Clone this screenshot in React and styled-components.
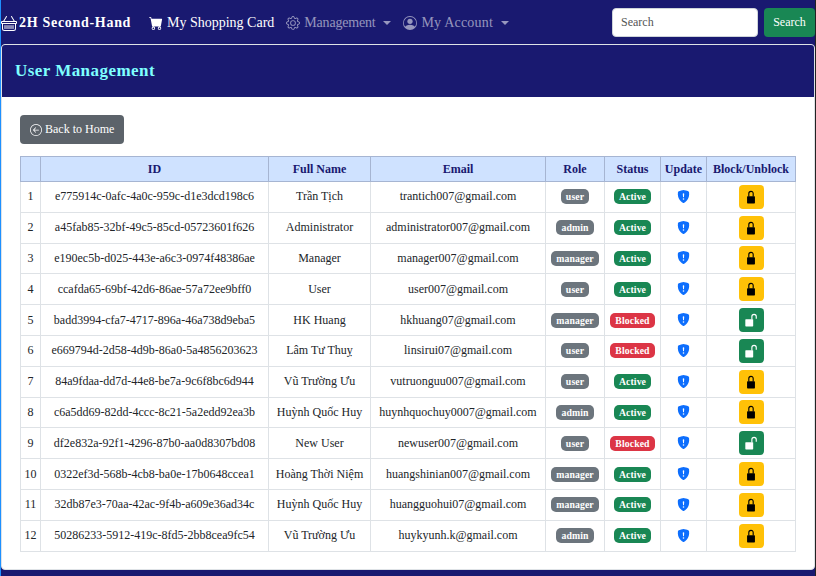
import React from 'react'
import styled, { createGlobalStyle } from 'styled-components'
import {
  BsBasket,
  BsCartFill,
  BsGear,
  BsPersonCircle,
  BsArrowLeftCircle,
  BsShieldFillExclamation
} from 'react-icons/bs'

const GlobalStyle = createGlobalStyle`
  html, body {
    margin: 0;
    padding: 0;
    background: #191970;
    height: 576px;
    overflow: hidden;
  }
  * { box-sizing: border-box; }
  body {
    font-family: "Liberation Serif", "Times New Roman", serif;
    font-size: 12px;
  }
`

const Page = styled.div`
  width: 816px;
  height: 576px;
  background: #191970;
  border-left: 1px solid #1e90ff;
  border-right: 1px solid #222;
  display: flex;
  flex-direction: column;
`

const Navbar = styled.nav`
  height: 44px;
  display: flex;
  align-items: center;
  color: #fff;
  flex-shrink: 0;
`

const Brand = styled.a`
  display: flex;
  align-items: center;
  gap: 2px;
  font-size: 14px;
  font-weight: bold;
  letter-spacing: 0.7px;
  color: #fff;
  width: 148px;
  padding-top: 1px;
`

const NavItem = styled.a`
  display: flex;
  align-items: center;
  gap: 4px;
  padding-top: 1px;
  font-size: 14px;
  letter-spacing: ${({ $spacing = 0 }) => $spacing}px;
  color: ${({ $muted }) => ($muted ? 'rgba(255,255,255,0.55)' : '#fff')};
  margin-right: ${({ $gap }) => $gap}px;
`

const Caret = styled.span`
  width: 0;
  height: 0;
  margin-left: 4px;
  border-top: 4px solid rgba(255,255,255,0.55);
  border-left: 4px solid transparent;
  border-right: 4px solid transparent;
`

const SearchForm = styled.form`
  margin-left: auto;
  display: flex;
  gap: 6px;
`

const SearchInput = styled.input`
  width: 146px;
  height: 29px;
  border: 1px solid #ced4da;
  border-radius: 4px;
  padding: 0 8px;
  font: 12px "Liberation Serif", serif;
  background: #fff;
  &::placeholder { color: #555; opacity: 1; }
`

const SearchButton = styled.button`
  width: 51px;
  height: 29px;
  border: none;
  border-radius: 4px;
  background: #198754;
  color: #fff;
  font: 12px "Liberation Serif", serif;
  padding: 0;
`

const Card = styled.section`
  flex: 0 0 526px;
  background: #fff;
  border: 1px solid #dee2e6;
  border-radius: 4px;
  overflow: hidden;
`

const CardHeader = styled.header`
  height: 52px;
  background: #191970;
  display: flex;
  align-items: center;
  padding-left: 13px;
`

const Title = styled.h2`
  margin: 0;
  font-size: 17px;
  font-weight: bold;
  color: #7fffff;
  letter-spacing: 0.45px;
`

const CardBody = styled.div`
  padding: 18px 0 0 18px;
`

const BackButton = styled.a`
  display: inline-flex;
  align-items: center;
  gap: 3px;
  width: 104px;
  height: 29px;
  padding-left: 10px;
  border-radius: 4px;
  background: #5c636a;
  color: #fff;
  font-size: 12px;
`

const Table = styled.table`
  width: 775px;
  margin-top: 12px;
  border-collapse: collapse;
  table-layout: fixed;
`

const Head = styled.th`
  height: 25px;
  padding: 0;
  background: #cfe2ff;
  border: 1px solid #a6b5d2;
  color: #191970;
  font-size: 12px;
  font-weight: bold;
  text-align: center;
  width: ${({ $w }) => $w}px;
`

const Cell = styled.td`
  height: 30.8px;
  padding: 0;
  border: 1px solid #dee2e6;
  color: #212529;
  font-size: 12px;
  text-align: center;
  vertical-align: middle;
`

const Badge = styled.span`
  display: inline-block;
  padding: 2px 5px;
  font-size: 9.75px;
  font-weight: bold;
  line-height: 11px;
  letter-spacing: 0.1px;
  border-radius: 5px;
  color: #fff;
  background: ${({ $bg }) => $bg};
`

const ShieldLink = styled.a`
  display: inline-flex;
  color: #0d6efd;
  font-size: 13px;
  vertical-align: middle;
  margin-bottom: 2px;
`

const LockButton = styled.button`
  display: inline-flex;
  align-items: center;
  justify-content: center;
  width: 25px;
  height: 24px;
  padding: 0;
  border: none;
  border-radius: 4px;
  background: ${({ $blocked }) => ($blocked ? '#198754' : '#ffc107')};
  color: ${({ $blocked }) => ($blocked ? '#fff' : '#000')};
  vertical-align: middle;
`

const LockIcon = () => (
  <svg width="14" height="14" viewBox="0 0 16 16">
    <rect x="3.5" y="7" width="9" height="8.5" rx="0.8" fill="currentColor" />
    <path d="M5.5 7.5V4a2.5 2.5 0 0 1 5 0v3.5" fill="none" stroke="currentColor" strokeWidth="1.3" />
  </svg>
)

const UnlockIcon = () => (
  <svg width="14" height="14" viewBox="0 0 16 16">
    <rect x="1.5" y="7" width="9" height="8.5" rx="0.8" fill="currentColor" />
    <path d="M9 7.5V4a2.5 2.5 0 0 1 5 0v2.5" fill="none" stroke="currentColor" strokeWidth="1.3" />
  </svg>
)

const users = [
  ['e775914c-0afc-4a0c-959c-d1e3dcd198c6', 'Trần Tịch', 'trantich007@gmail.com', 'user', false],
  ['a45fab85-32bf-49c5-85cd-05723601f626', 'Administrator', 'administrator007@gmail.com', 'admin', false],
  ['e190ec5b-d025-443e-a6c3-0974f48386ae', 'Manager', 'manager007@gmail.com', 'manager', false],
  ['ccafda65-69bf-42d6-86ae-57a72ee9bff0', 'User', 'user007@gmail.com', 'user', false],
  ['badd3994-cfa7-4717-896a-46a738d9eba5', 'HK Huang', 'hkhuang07@gmail.com', 'manager', true],
  ['e669794d-2d58-4d9b-86a0-5a4856203623', 'Lâm Tư Thuỵ', 'linsirui07@gmail.com', 'user', true],
  ['84a9fdaa-dd7d-44e8-be7a-9c6f8bc6d944', 'Vũ Trường Ưu', 'vutruonguu007@gmail.com', 'user', false],
  ['c6a5dd69-82dd-4ccc-8c21-5a2edd92ea3b', 'Huỳnh Quốc Huy', 'huynhquochuy0007@gmail.com', 'admin', false],
  ['df2e832a-92f1-4296-87b0-aa0d8307bd08', 'New User', 'newuser007@gmail.com', 'user', true],
  ['0322ef3d-568b-4cb8-ba0e-17b0648ccea1', 'Hoàng Thời Niệm', 'huangshinian007@gmail.com', 'manager', false],
  ['32db87e3-70aa-42ac-9f4b-a609e36ad34c', 'Huỳnh Quốc Huy', 'huangguohui07@gmail.com', 'manager', false],
  ['50286233-5912-419c-8fd5-2bb8cea9fc54', 'Vũ Trường Ưu', 'huykyunh.k@gmail.com', 'admin', false]
]

const columns = [
  ['', 20],
  ['ID', 228],
  ['Full Name', 102],
  ['Email', 175],
  ['Role', 59],
  ['Status', 56],
  ['Update', 46],
  ['Block/Unblock', 89]
]

export default function App() {
  return (
    <>
      <GlobalStyle />
      <Page>
        <Navbar>
          <Brand><BsBasket size={16} /> 2H Second-Hand</Brand>
          <NavItem $gap={12}><BsCartFill size={14} /> My Shopping Card</NavItem>
          <NavItem $muted $gap={12} $spacing={-0.2}><BsGear size={14} /> Management <Caret /></NavItem>
          <NavItem $muted $gap={0} $spacing={0.2}><BsPersonCircle size={14} /> My Account <Caret /></NavItem>
          <SearchForm onSubmit={(e) => e.preventDefault()}>
            <SearchInput placeholder="Search" />
            <SearchButton>Search</SearchButton>
          </SearchForm>
        </Navbar>
        <Card>
          <CardHeader><Title>User Management</Title></CardHeader>
          <CardBody>
            <BackButton><BsArrowLeftCircle size={12} /> Back to Home</BackButton>
            <Table>
              <thead>
                <tr>
                  {columns.map(([label, w]) => <Head key={label} $w={w}>{label}</Head>)}
                </tr>
              </thead>
              <tbody>
                {users.map(([id, name, email, role, blocked], i) => (
                  <tr key={id}>
                    <Cell>{i + 1}</Cell>
                    <Cell>{id}</Cell>
                    <Cell>{name}</Cell>
                    <Cell>{email}</Cell>
                    <Cell><Badge $bg="#6c757d">{role}</Badge></Cell>
                    <Cell>
                      <Badge $bg={blocked ? '#dc3545' : '#198754'}>{blocked ? 'Blocked' : 'Active'}</Badge>
                    </Cell>
                    <Cell><ShieldLink><BsShieldFillExclamation /></ShieldLink></Cell>
                    <Cell>
                      <LockButton $blocked={blocked}>
                        {blocked ? <UnlockIcon /> : <LockIcon />}
                      </LockButton>
                    </Cell>
                  </tr>
                ))}
              </tbody>
            </Table>
          </CardBody>
        </Card>
      </Page>
    </>
  )
}
